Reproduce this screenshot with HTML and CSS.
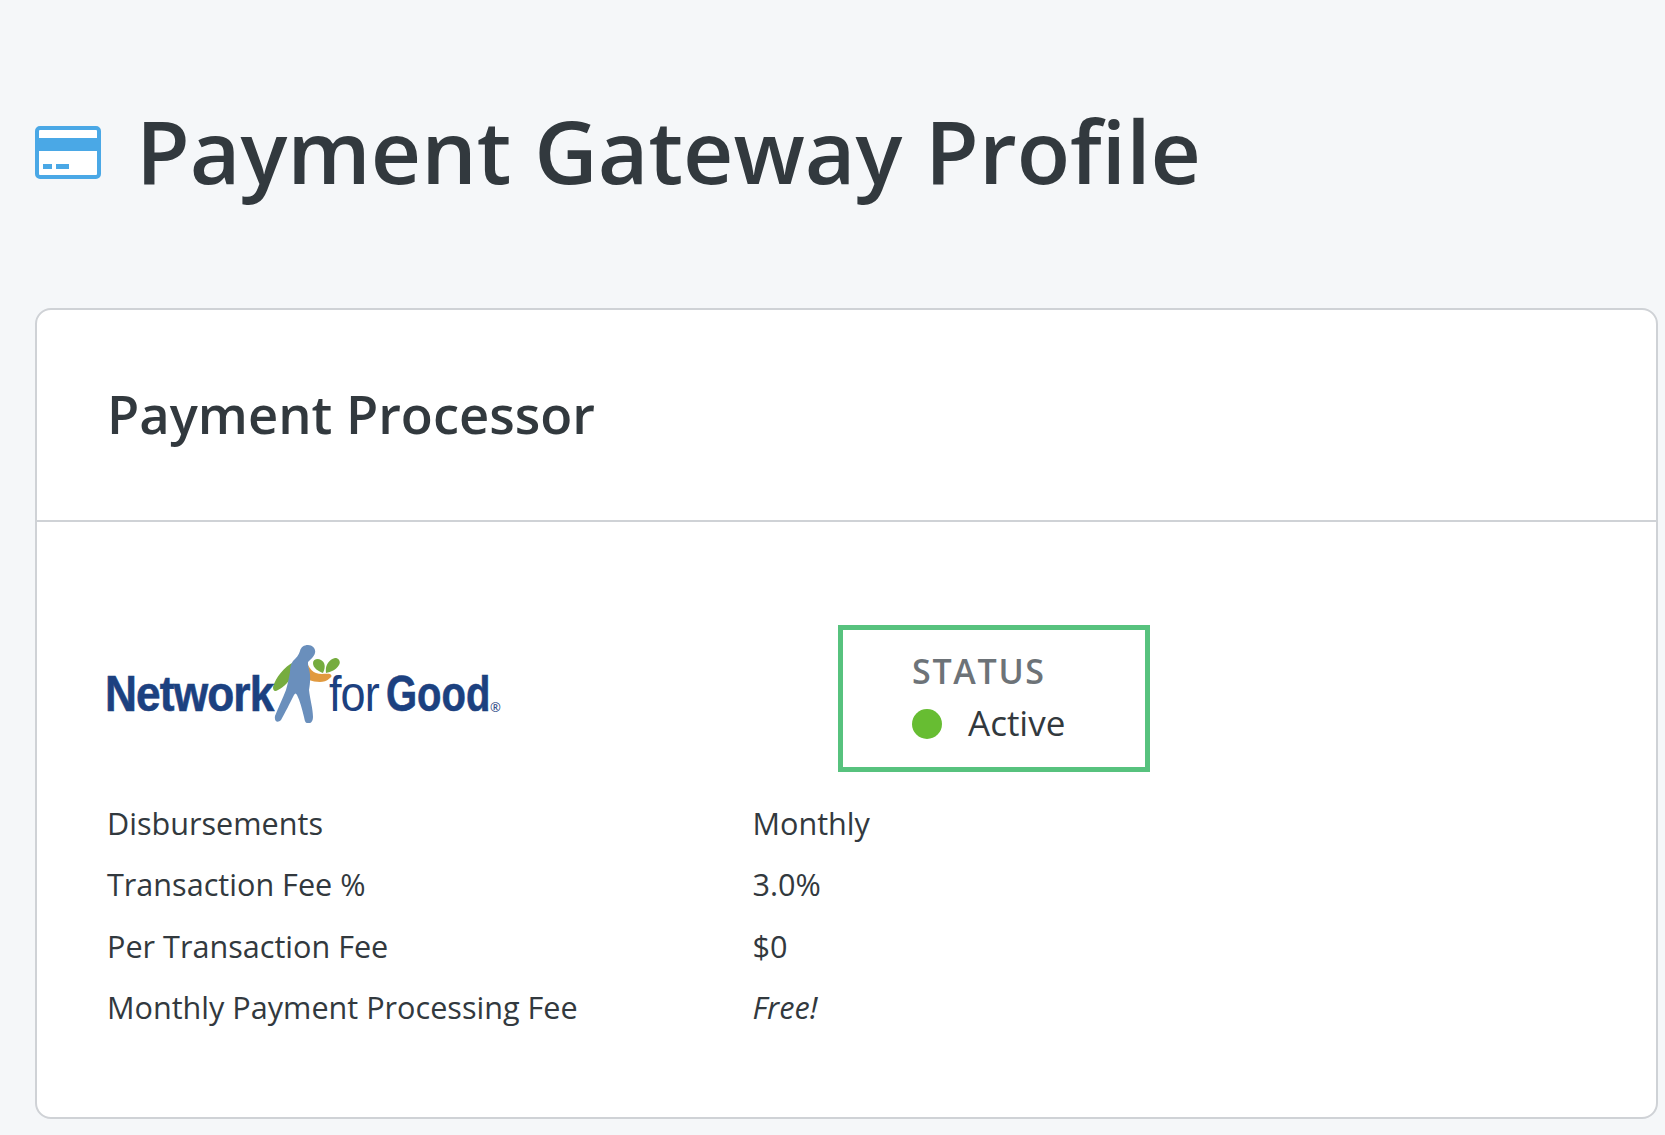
FILE: index.html
```html
<!DOCTYPE html>
<html lang="en">
<head>
<meta charset="utf-8">
<title>Payment Gateway Profile</title>
<link rel="stylesheet" href="styles.css">
</head>
<body>
<main class="page">
  <header class="page-head">
    <svg class="card-icon" viewBox="0 0 66 53" aria-hidden="true">
      <rect x="2" y="2" width="62" height="49" rx="3" fill="#fff" stroke="#4aa8e6" stroke-width="4"/>
      <rect x="2" y="12" width="62" height="13" fill="#4aa8e6"/>
      <rect x="8" y="38" width="9" height="5" fill="#4aa8e6"/>
      <rect x="21" y="38" width="13" height="5" fill="#4aa8e6"/>
    </svg>
    <h1 class="page-title">Payment Gateway Profile</h1>
  </header>
  <section class="card">
    <h2 class="card-title">Payment Processor</h2>
    <div class="card-body">
      <div class="top-row">
        <div class="logo">
          <span class="logo-word logo-network">Network</span>
          <svg class="logo-figure" viewBox="0 0 67 78" aria-hidden="true">
            <path d="M21 17C11 22 3 32 0 42C0 46 2 47 5 45C11 42 17 36 20 29Z" fill="#76ac3f"/>
            <path d="M35 20C37 24 40 27 43 28C48 30 53 28 57 29C59 30 59 32 57 33C54 36 50 37 47 37C43 37 39 36 36 35Z" fill="#e19a3f"/>
            <path d="M50 28C45 26 40 23 40 18C40 14 45 13 48 15C52 17 53 22 50 28Z" fill="#76ac3f"/>
            <path d="M53 28C52 21 55 15 62 13C66 13 68 17 66 20C63 25 58 27 53 28Z" fill="#76ac3f"/>
            <path d="M35 0C40 0 43 4 42 8C41 12 37 15 35 17C35 19 35 21 36 24C38 31 37 39 36 45C37 54 40 64 40 72C40 77 37 79 35 78C32 78 32 76 31 72C29 64 27 56 24 50C23 48 22 48 21 50C17 58 12 68 8 75C5 78 1 77 2 71C5 63 10 53 13 45C15 38 16 32 17 27C17 22 18 19 20 16C23 13 26 10 27 6C28 2 31 0 35 0Z" fill="#6a8fbc"/>
          </svg>
          <span class="logo-word logo-for">for</span>
          <span class="logo-word logo-good">Good</span>
          <span class="logo-reg">®</span>
        </div>
        <div class="status-box">
          <div class="status-label">STATUS</div>
          <div class="status-value"><span class="status-dot"></span>Active</div>
        </div>
      </div>
      <dl class="details">
        <dt>Disbursements</dt><dd>Monthly</dd>
        <dt>Transaction Fee %</dt><dd>3.0%</dd>
        <dt>Per Transaction Fee</dt><dd>$0</dd>
        <dt>Monthly Payment Processing Fee</dt><dd class="free">Free!</dd>
      </dl>
    </div>
  </section>
</main>
</body>
</html>
```
FILE: styles.css
```css
* { box-sizing: border-box; }
html, body { margin: 0; height: 100%; }
body {
  background: #f5f7f9;
  color: #32393e;
  font-family: "Open Sans", "Liberation Sans", sans-serif;
  overflow: hidden;
}
.page { padding: 92px 7px 0 35px; }
.page-head { display: flex; align-items: center; gap: 35px; height: 120px; margin-bottom: 96px; }
.card-icon { width: 66px; height: 53px; flex: none; }
.page-title { margin: -4px 0 0; font-size: 87.5px; line-height: 120px; font-weight: 600; white-space: nowrap; }
.card {
  width: 1623px;
  height: 811px;
  background: #fff;
  border: 2px solid #cfd2d6;
  border-radius: 16px;
}
.card-title {
  margin: 0;
  height: 212px;
  padding: 0 70px 3px;
  display: flex;
  align-items: center;
  font-size: 52.5px;
  font-weight: 600;
  border-bottom: 2px solid #cfd2d6;
}
.card-body { padding: 103px 70px 0; }
.top-row { display: flex; align-items: center; height: 147px; }
.logo { width: 733px; height: 90px; padding-bottom: 9px; display: flex; align-items: center; color: #1c4180; margin-left: -2px; }
.logo-word { font-family: "Liberation Sans", sans-serif; line-height: 1; display: inline-block; transform-origin: left center; white-space: nowrap; }
.logo-network { font-size: 50px; font-weight: 700; width: 168px; transform: scaleX(.885); letter-spacing: -1px; -webkit-text-stroke: .6px #1c4180; }
.logo-figure { width: 67px; height: 78px; margin: 0 -11px 20px 0; flex: none; }
.logo-for { font-size: 50px; width: 57px; transform: scaleX(.9); letter-spacing: -1px; }
.logo-good { font-size: 50px; font-weight: 700; width: 104px; transform: scaleX(.8); -webkit-text-stroke: .6px #1c4180; }
.logo-reg { font-size: 13px; align-self: flex-end; margin: 0 0 19px 0; }
.status-box {
  width: 312px;
  height: 147px;
  padding: 19px 0 0 69px;
  border: 5px solid #57c27e;
}
.status-label { font-size: 34px; line-height: 44px; font-weight: 600; letter-spacing: 1.7px; color: #6d7378; }
.status-value { display: flex; align-items: center; gap: 26px; font-size: 35px; line-height: 46px; margin-top: 7px; }
.status-dot { width: 30px; height: 30px; margin-top: 2px; border-radius: 50%; background: #67bd32; flex: none; }
.details {
  margin: 20.5px 0 0;
  display: grid;
  grid-template-columns: 645.5px 1fr;
  grid-auto-rows: 61.3px;
  align-items: center;
  font-size: 30.6px;
}
.details dt, .details dd { margin: 0; }
.free { font-style: italic; }
```
